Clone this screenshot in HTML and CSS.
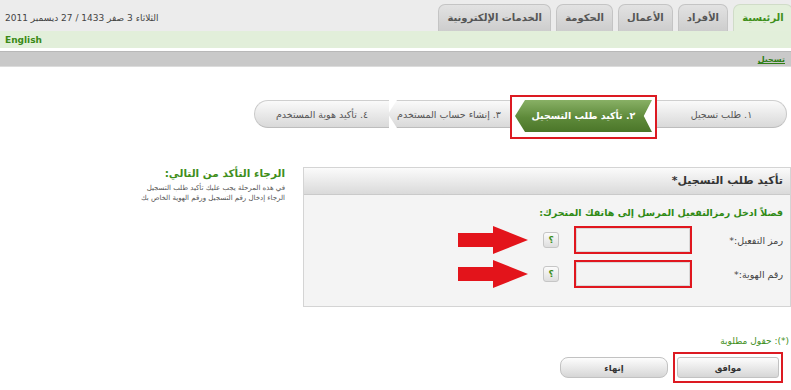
FILE: index.html
```html
<!DOCTYPE html>
<html lang="ar" dir="rtl">
<head>
  <meta charset="UTF-8" />
  <title>تأكيد طلب التسجيل</title>
  <link rel="stylesheet" href="styles.css">
</head>
<body>

  <!-- Top tabs -->
  <div class="top-bar">
    <div class="tabs">
      <div class="tab active">الرئيسية</div>
      <div class="tab">الأفراد</div>
      <div class="tab">الأعمال</div>
      <div class="tab">الحكومة</div>
      <div class="tab wide">الخدمات الإلكترونية</div>
    </div>
    <div class="date-text">الثلاثاء 3 صفر 1433 / 27 ديسمبر 2011</div>
  </div>

  <div class="lang-bar"><span class="lang-link">English</span></div>
  <div class="crumb-bar"><span class="crumb">تسجيل</span></div>

  <!-- Wizard -->
  <div class="wizard">
    <div class="step first">١. طلب تسجيل</div>
    <div class="highlight step-wrap">
      <div class="step current">٢. تأكيد طلب التسجيل</div>
    </div>
    <div class="step">٣. إنشاء حساب المستخدم</div>
    <div class="step last">٤. تأكيد هوية المستخدم</div>
  </div>

  <!-- Content -->
  <div class="content">
    <div class="panel">
      <div class="panel-head">تأكيد طلب التسجيل*</div>
      <div class="panel-body">
        <div class="intro">فضلاً ادخل رمزالتفعيل المرسل إلى هاتفك المتحرك:</div>

        <div class="field-row">
          <label class="field-label">رمز التفعيل:*</label>
          <input class="field-input" type="text">
          <span class="help">؟</span>
          <svg class="arrow" width="70" height="28" viewBox="0 0 70 28">
            <path d="M70 14 L35 0 L35 7 L0 7 L0 21 L35 21 L35 28 Z" fill="#e3141b"/>
          </svg>
        </div>

        <div class="field-row">
          <label class="field-label">رقم الهوية:*</label>
          <input class="field-input" type="text">
          <span class="help">؟</span>
          <svg class="arrow" width="70" height="28" viewBox="0 0 70 28">
            <path d="M70 14 L35 0 L35 7 L0 7 L0 21 L35 21 L35 28 Z" fill="#e3141b"/>
          </svg>
        </div>
      </div>
    </div>

    <div class="side-note">
      <div class="side-title">الرجاء التأكد من التالي:</div>
      <p>في هذه المرحلة يجب عليك تأكيد طلب التسجيل<br>الرجاء إدخال رقم التسجيل ورقم الهوية الخاص بك</p>
    </div>
  </div>

  <div class="required-note">(*): حقول مطلوبة</div>

  <div class="actions">
    <div class="highlight">
      <button class="btn">موافق</button>
    </div>
    <button class="btn">إنهاء</button>
  </div>

</body>
</html>
```

FILE: styles.css
```css
body {
  margin: 0;
  padding: 0;
  font-family: "DejaVu Sans", sans-serif;
  font-size: 10px;
  color: #333;
  background: #fff;
  width: 791px;
  overflow: hidden;
}

/* Top bar */
.top-bar {
  display: flex;
  justify-content: space-between;
  align-items: flex-end;
  height: 31px;
  background: #ececec;
}

.tabs {
  display: flex;
  gap: 5px;
  margin-right: -2px;
}

.tab {
  height: 26px;
  line-height: 26px;
  padding: 0 8px;
  background: linear-gradient(to bottom, #e2e2e2, #cdcdcd);
  border: 1px solid #c4c4c4;
  border-bottom: none;
  border-radius: 7px 7px 0 0;
  font-size: 10px;
  font-weight: bold;
  color: #555;
  text-align: center;
  min-width: 32px;
}

.tab.active {
  background: #e3efdb;
  color: #3f8f1c;
  border-color: #d0dcc8;
  min-width: 42px;
}

.tab.wide {
  min-width: 95px;
}

.date-text {
  align-self: center;
  margin-left: 5px;
  font-size: 9px;
  color: #444;
  padding-top: 4px;
}

.lang-bar {
  height: 17px;
  line-height: 17px;
  background: #e2efda;
  direction: ltr;
  padding-left: 5px;
  border-bottom: 3px solid #fff;
}

.lang-link {
  color: #3a8a16;
  font-weight: bold;
  font-size: 9px;
}

.crumb-bar {
  height: 14px;
  line-height: 14px;
  background: #c9c9c9;
  border-top: 1px solid #b8b8b8;
  border-bottom: 1px solid #dcdcdc;
  padding-right: 6px;
}

.crumb {
  color: #2f7d14;
  font-size: 8px;
  font-weight: bold;
  text-decoration: underline;
}

/* Wizard */
.wizard {
  display: flex;
  align-items: flex-start;
  margin: 28px 4px 0 0;
  height: 44px;
}

.step {
  height: 28px;
  line-height: 28px;
  margin-top: 5px;
  background: linear-gradient(to bottom, #fafafa, #d9d9d9);
  border-top: 1px solid #cfcfcf;
  border-bottom: 1px solid #bdbdbd;
  color: #555;
  font-size: 9.5px;
  text-align: center;
  width: 122px;
  box-sizing: border-box;
  clip-path: polygon(100% 0, 100% 100%, 9px 100%, 0 50%, 9px 0);
}

.step.first {
  width: 130px;
  border-radius: 0 14px 14px 0;
  border-right: 1px solid #c8c8c8;
  clip-path: none;
}

.step.last {
  width: 135px;
  border-radius: 14px 0 0 14px;
  border-left: 1px solid #c8c8c8;
  clip-path: none;
  margin-right: -1px;
}

.highlight {
  border: 2px solid #dc1a22;
  padding: 3px 2px;
}

.step-wrap {
  box-sizing: border-box;
  height: 44px;
  padding: 3px 3px 0;
}

.step.current {
  margin-top: 0;
  width: 137px;
  height: 32px;
  line-height: 32px;
  background: linear-gradient(to bottom, #88b065, #5e8a3a 55%, #4b7629);
  border: none;
  color: #fff;
  font-weight: bold;
  clip-path: polygon(100% 0, 94% 50%, 100% 100%, 10px 100%, 0 50%, 10px 0);
}

/* Content */
.content {
  display: flex;
  align-items: flex-start;
  gap: 18px;
  margin-top: 28px;
}

.panel {
  width: 488px;
  border: 1px solid #d4d4d4;
  box-sizing: border-box;
  background: #f4f4f4;
}

.panel-head {
  height: 26px;
  line-height: 26px;
  padding-right: 7px;
  background: linear-gradient(to bottom, #fbfbfb, #dadada);
  border-bottom: 1px solid #cacaca;
  font-size: 11px;
  font-weight: bold;
  color: #333;
}

.panel-body {
  padding: 12px 7px 18px 0;
}

.intro {
  color: #2f8a14;
  font-weight: bold;
  font-size: 9.5px;
  margin-bottom: 8px;
}

.field-row {
  display: flex;
  align-items: center;
  height: 28px;
}

.field-row + .field-row {
  margin-top: 6px;
}

.field-label {
  width: 82px;
  margin-left: 9px;
  font-size: 9.5px;
  color: #444;
}

.field-input {
  width: 118px;
  height: 28px;
  box-sizing: border-box;
  border: 2px solid #e0161e;
  background: #f3f3f3;
  box-shadow: inset 0 0 0 1px #d8d8d8;
  margin: 0 0 0 15px;
  padding: 0;
}

.help {
  width: 14px;
  height: 14px;
  line-height: 14px;
  border: 1px solid #c6c6c6;
  border-radius: 3px;
  background: linear-gradient(to bottom, #fbfbfb, #dedede);
  color: #3f8f1c;
  font-size: 9px;
  font-weight: bold;
  text-align: center;
  margin-left: 15px;
}

.arrow {
  display: block;
}

.side-title {
  color: #3f8f1c;
  font-weight: bold;
  font-size: 10.5px;
  margin-bottom: 4px;
  white-space: nowrap;
}

.side-note p {
  margin: 0;
  font-size: 7px;
  line-height: 10px;
  color: #555;
  white-space: nowrap;
}

.required-note {
  margin-top: 29px;
  padding-right: 2px;
  color: #3f8f1c;
  font-size: 9px;
}

.actions {
  display: flex;
  align-items: center;
  gap: 5px;
  margin: 6px 8px 0 0;
}

.btn {
  width: 108px;
  height: 21px;
  border: 1px solid #c2c2c2;
  border-radius: 8px;
  background: linear-gradient(to bottom, #fdfdfd, #d6d6d6);
  font-family: "DejaVu Sans", sans-serif;
  font-size: 8.5px;
  color: #333;
  font-weight: bold;
}

.highlight .btn {
  display: block;
  width: 102px;
  border-radius: 3px;
}
```
